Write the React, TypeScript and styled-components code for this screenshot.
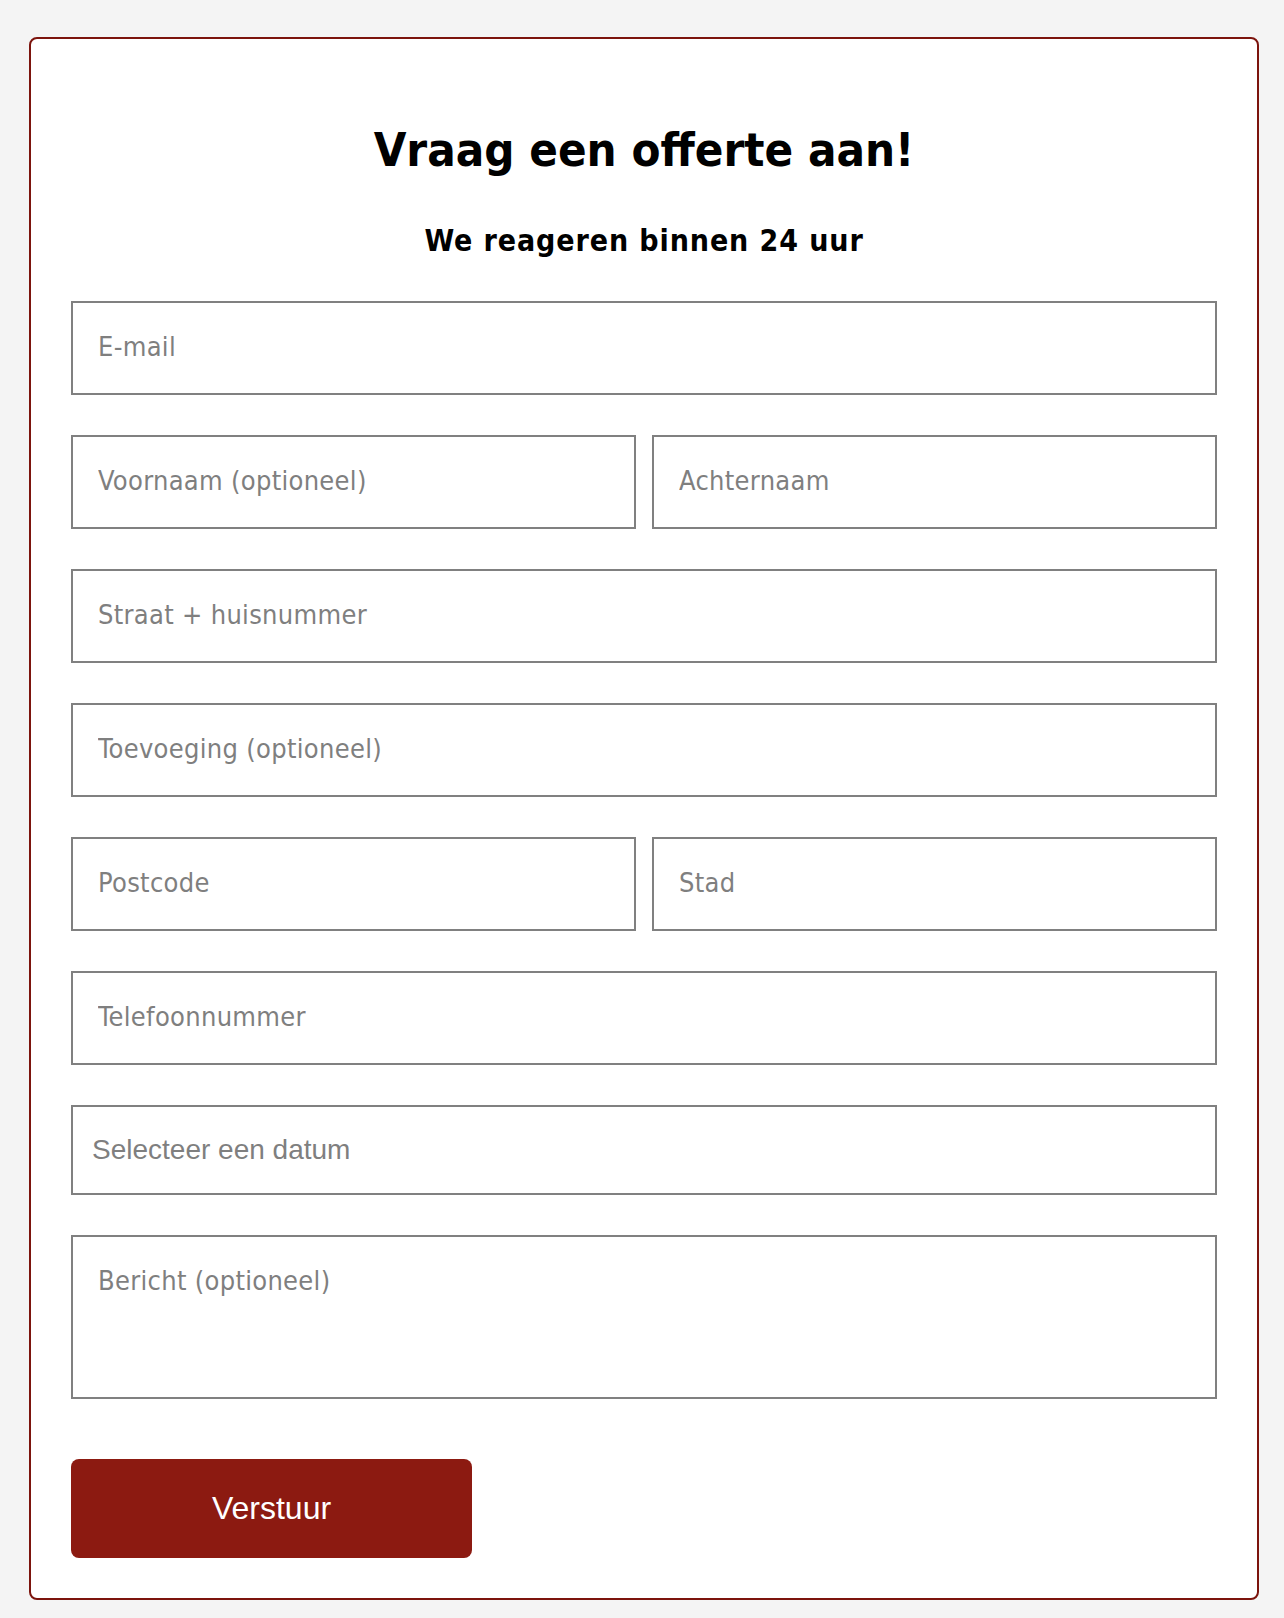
import React from "react";
import styled, { createGlobalStyle } from "styled-components";

const GlobalStyle = createGlobalStyle`
  html, body {
    margin: 0;
    padding: 0;
    background: #f4f4f4;
  }
  * {
    box-sizing: border-box;
  }
`;

const humanist = `"DejaVu Sans Condensed", "DejaVu Sans", Verdana, sans-serif`;
const arial = `"Liberation Sans", Arial, Helvetica, sans-serif`;

const Page = styled.div`
  padding: 37px 25px 17px 29px;
  background: #f4f4f4;
`;

const Card = styled.section`
  background: #ffffff;
  border: 2px solid #7c140d;
  border-radius: 8px;
  padding: 40px;
`;

const Title = styled.h1`
  margin: 43px 0 0;
  font-family: ${humanist};
  font-weight: 700;
  font-size: 47px;
  line-height: 56px;
  text-align: center;
  color: #000;
`;

const Subtitle = styled.h2`
  margin: 45px 0 0;
  font-family: ${humanist};
  font-weight: 700;
  font-size: 30px;
  letter-spacing: 0.9px;
  line-height: 36px;
  text-align: center;
  color: #000;
`;

const Form = styled.form`
  margin-top: 42px;
  display: flex;
  flex-direction: column;
  gap: 40px;
`;

const Row = styled.div`
  display: grid;
  grid-template-columns: 1fr 1fr;
  gap: 16px;
`;

const Field = styled.input<{ $compact?: boolean }>`
  display: block;
  width: 100%;
  height: ${(p) => (p.$compact ? "90px" : "94px")};
  margin: 0;
  padding: ${(p) => (p.$compact ? "0 19px" : "0 25px 3px")};
  border: 2px solid #808080;
  border-radius: 0;
  background: #fff;
  outline: none;
  font-family: ${(p) => (p.$compact ? arial : humanist)};
  font-size: ${(p) => (p.$compact ? "28px" : "27px")};
  letter-spacing: ${(p) => (p.$compact ? "0" : "0.3px")};
  color: #333;

  &::placeholder {
    color: #7f7f7f;
    opacity: 1;
  }
`;

const Message = styled.textarea`
  display: block;
  width: 100%;
  height: 164px;
  margin: 0;
  padding: 28px 25px 0;
  border: 2px solid #808080;
  border-radius: 0;
  background: #fff;
  outline: none;
  resize: none;
  font-family: ${humanist};
  font-size: 27px;
  letter-spacing: 0.3px;
  color: #333;

  &::placeholder {
    color: #7f7f7f;
    opacity: 1;
  }
`;

const Submit = styled.button`
  margin-top: 20px;
  width: 401px;
  height: 99px;
  border: none;
  border-radius: 8px;
  background: #8c1a11;
  color: #fff;
  font-family: ${arial};
  font-size: 32px;
  cursor: pointer;
`;

export default function App() {
  return (
    <>
      <GlobalStyle />
      <Page>
        <Card>
          <Title>Vraag een offerte aan!</Title>
          <Subtitle>We reageren binnen 24 uur</Subtitle>
          <Form onSubmit={(e) => e.preventDefault()}>
            <Field type="email" placeholder="E-mail" />
            <Row>
              <Field type="text" placeholder="Voornaam (optioneel)" />
              <Field type="text" placeholder="Achternaam" />
            </Row>
            <Field type="text" placeholder="Straat + huisnummer" />
            <Field type="text" placeholder="Toevoeging (optioneel)" />
            <Row>
              <Field type="text" placeholder="Postcode" />
              <Field type="text" placeholder="Stad" />
            </Row>
            <Field type="tel" placeholder="Telefoonnummer" />
            <Field $compact type="text" placeholder="Selecteer een datum" />
            <Message placeholder="Bericht (optioneel)" />
            <div>
              <Submit type="submit">Verstuur</Submit>
            </div>
          </Form>
        </Card>
      </Page>
    </>
  );
}
